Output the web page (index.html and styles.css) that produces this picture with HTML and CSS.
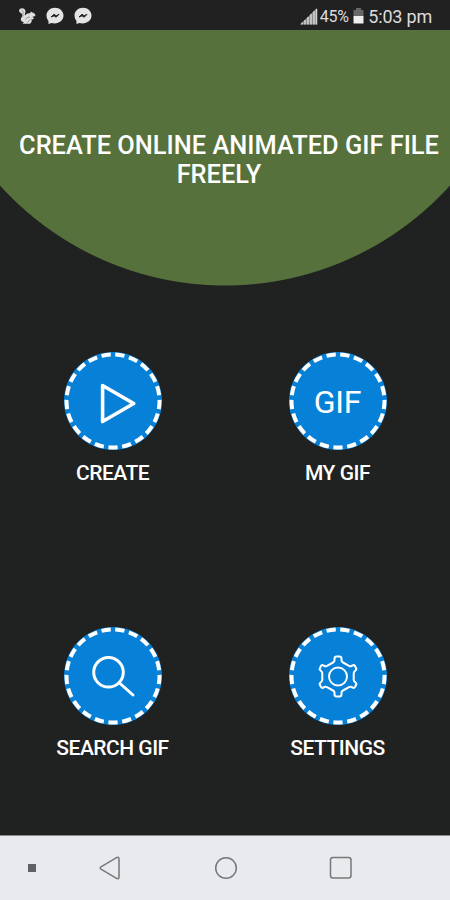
FILE: index.html
```html
<!DOCTYPE html>
<html lang="en">
<head>
  <meta charset="UTF-8">
  <meta name="viewport" content="width=device-width, initial-scale=1.0">
  <title>GIF Maker</title>
  <link rel="stylesheet" href="styles.css">
</head>
<body>
  <div class="screen">

    <div class="status-bar">
      <div class="notifications">
        <svg width="19" height="19" viewBox="0 0 19 19">
          <path d="M1 3.5C1.500 1.200 5 .6 6.800 2.500C8.500 4.500 6.300 6.400 7 8.500C8.300 6.800 10 6 12 6.300L13 4.500L14.200 5.500C16 5.500 17.300 7 17.500 8.500C16.800 9.600 15.300 9.500 14.500 9.800L16 11.500L14.500 12.500L13.500 11.800C14.200 14 13.500 15.500 12 16.800H4.500L6 15.300C3 14.500 2 12.500 3.500 10.500C4.600 9 4.800 7.700 3.500 6.500C2.500 5.700 1 5.300 1 3.500Z" fill="#dedede"/>
          <path d="M3.500 3.300C6.500 3.800 4.500 7 5 9.500M7.500 12.500C8.500 10.500 10.500 9.500 12 10.500M9.500 15.500L12 12.500" fill="none" stroke="#777" stroke-width=".7"/>
        </svg>
        <svg width="18" height="18" viewBox="0 0 18 18">
          <path d="M9 .7C4.200.7.500 4.200.500 8.500C.500 10.900 1.600 13 2.500 14V17L5.500 16C11.800 17.600 17.500 13.900 17.500 8.500C17.500 4.200 13.800.7 9 .7Z" fill="#e4e4e4"/>
          <path d="M5 10L8 7.300L10.200 8.800L13 7.300L10.200 10.200L8 8.800Z" fill="#222" stroke="#222"/>
        </svg>
        <svg width="18" height="18" viewBox="0 0 18 18">
          <path d="M9 .7C4.200.7.500 4.200.500 8.500C.500 10.900 1.600 13 2.500 14V17L5.500 16C11.800 17.600 17.500 13.900 17.500 8.500C17.500 4.200 13.800.7 9 .7Z" fill="#e4e4e4"/>
          <path d="M5 10L8 7.300L10.200 8.800L13 7.300L10.200 10.200L8 8.800Z" fill="#222" stroke="#222"/>
        </svg>
      </div>
      <div class="system">
        <svg class="signal" width="18" height="17" viewBox="0 0 18 17">
          <path d="M0 16.500L17 0V16.500Z" fill="#8c8c8c"/>
          <path d="M2 16.500V14.500M5 16.500V12M8 16.500V9M11 16.500V6M14 16.500V3M16.500 16.500V1" stroke="#d2d2d2" stroke-width="1.500"/>
        </svg>
        <span class="percent">45%</span>
        <svg class="battery" width="11" height="16" viewBox="0 0 11 16">
          <path d="M3 0H8V2H10.500V8H.500V2H3Z" fill="#686868"/>
          <path d="M.500 8H10.500V15.500H.500Z" fill="#efefef"/>
        </svg>
        <span class="time">5:03 pm</span>
      </div>
    </div>

    <header class="banner">
      <h1>CREATE ONLINE ANIMATED GIF FILE <span class="last-line">FREELY</span></h1>
    </header>

    <main class="menu">
      <a class="item">
        <svg class="badge" viewBox="0 0 98 98">
          <circle class="disc" cx="49" cy="49" r="49"/>
          <circle class="dashes" cx="49" cy="49" r="46.500" pathLength="210" transform="rotate(-90 49 49)"/>
          <path class="line play" d="M38.600 33.500L69.700 51.500L38.600 69.500Z"/>
        </svg>
        <span class="label">CREATE</span>
      </a>
      <a class="item">
        <svg class="badge" viewBox="0 0 98 98">
          <circle class="disc" cx="49" cy="49" r="49"/>
          <circle class="dashes" cx="49" cy="49" r="46.500" pathLength="210" transform="rotate(-90 49 49)"/>
          <text class="gif" x="48.500" y="61" text-anchor="middle">GIF</text>
        </svg>
        <span class="label">MY GIF</span>
      </a>
      <a class="item">
        <svg class="badge" viewBox="0 0 98 98">
          <circle class="disc" cx="49" cy="49" r="49"/>
          <circle class="dashes" cx="49" cy="49" r="46.500" pathLength="210" transform="rotate(-90 49 49)"/>
          <circle class="line" cx="44.500" cy="45.300" r="14.800"/>
          <path class="line" d="M55.500 56L69 68"/>
        </svg>
        <span class="label">SEARCH GIF</span>
      </a>
      <a class="item">
        <svg class="badge" viewBox="0 0 98 98">
          <circle class="disc" cx="49" cy="49" r="49"/>
          <circle class="dashes" cx="49" cy="49" r="46.500" pathLength="210" transform="rotate(-90 49 49)"/>
          <g class="line thin" transform="translate(49 49.500)">
            <circle r="9"/>
            <path d="M-3.500-16V-18Q-3.500-20-1.500-20H1.500Q3.500-20 3.500-18V-16Q3.500-14.800 5-14L11-10.700Q12.500-10 13.500-10.500L14.500-11Q16-12 17-10.500L18-8.500Q18.900-7 17.400-6L16.700-5.300Q15.700-4.500 15.700-3V3Q15.700 4.500 16.700 5.300L17.400 6Q18.900 7 18 8.500L17 10.500Q16 12 14.500 11L13.500 10.500Q12.500 10 11 10.700L5 14Q3.500 14.800 3.500 16V18Q3.500 20 1.500 20H-1.500Q-3.500 20-3.500 18V16Q-3.500 14.800-5 14L-11 10.700Q-12.500 10-13.500 10.500L-14.500 11Q-16 12-17 10.500L-18 8.500Q-18.900 7-17.400 6L-16.700 5.300Q-15.700 4.500-15.700 3V-3Q-15.700-4.500-16.700-5.300L-17.400-6Q-18.900-7-18-8.500L-17-10.500Q-16-12-14.500-11L-13.500-10.500Q-12.500-10-11-10.700L-5-14Q-3.500-14.800-3.500-16Z"/>
          </g>
        </svg>
        <span class="label">SETTINGS</span>
      </a>
    </main>

    <nav class="nav-bar">
      <span class="dot"></span>
      <svg class="back" width="22" height="24" viewBox="0 0 22 24">
        <path d="M2 10.800L17.500 1.700Q20 .500 20 3V21Q20 23.500 17.500 22.300L2 13.200Q.500 12 2 10.800Z"/>
      </svg>
      <svg class="home" width="24" height="24" viewBox="0 0 24 24">
        <circle cx="12" cy="12" r="10.300"/>
      </svg>
      <svg class="recent" width="24" height="24" viewBox="0 0 24 24">
        <rect x="1.500" y="1.500" width="20.500" height="20.500" rx="2.500"/>
      </svg>
    </nav>

  </div>
</body>
</html>
```

FILE: styles.css
```css
* {
  box-sizing: border-box;
}

body {
  margin: 0;
  font-family: Roboto, sans-serif;
  background-color: #202221;
}

.screen {
  display: flex;
  flex-direction: column;
  width: 450px;
  height: 900px;
  overflow: hidden;
  background-color: #202221;
}

.status-bar {
  display: flex;
  justify-content: space-between;
  align-items: center;
  height: 30px;
  padding: 2px 18px 0 17.5px;
  background-color: #222122;
  color: #dcdcdc;
}

.notifications {
  display: flex;
  align-items: center;
  gap: 9.5px;
}

.system {
  display: flex;
  align-items: center;
}

.percent {
  margin-left: 2px;
  font-size: 16px;
  letter-spacing: -0.2px;
}

.battery {
  margin: 0 4px 0 4.5px;
}

.time {
  font-size: 18px;
  letter-spacing: -0.2px;
}

/* green area with rounded bottom edge */
.banner {
  height: 256px;
  padding-top: 101px;
  background: radial-gradient(circle 303px at 225px -47.5px, #56713b 302.5px, transparent 303.5px);
}

.banner h1 {
  width: 430px;
  margin: 0 0 0 14px;
  color: #fff;
  font-size: 25.4px;
  font-weight: 500;
  line-height: 29px;
  text-align: center;
}

.last-line {
  padding-right: 20px;
}

.menu {
  display: grid;
  grid-template-columns: 1fr 1fr;
  grid-template-rows: 275px 1fr;
  flex: 1;
  padding-top: 66px;
}

.item {
  display: flex;
  flex-direction: column;
  align-items: center;
}

.badge {
  width: 98px;
  height: 98px;
}

.disc {
  fill: #0780d8;
}

.dashes {
  fill: none;
  stroke: #fff;
  stroke-width: 4;
  stroke-dasharray: 6.7 3.3;
  stroke-dashoffset: -1.65;
}

.line {
  fill: none;
  stroke: #fff;
  stroke-width: 3;
  stroke-linecap: round;
  stroke-linejoin: round;
}

.play {
  stroke-width: 3.6;
}

.thin {
  stroke-width: 2;
}

.gif {
  fill: #fff;
  font-size: 32px;
  letter-spacing: -0.3px;
}

.label {
  margin-top: 11px;
  color: #fff;
  font-size: 21px;
  font-weight: 500;
  line-height: 25px;
  letter-spacing: -0.5px;
}

.nav-bar {
  display: flex;
  align-items: center;
  height: 65px;
  padding-left: 28px;
  background-color: #e9eaee;
  border-top: 1px solid #8b8b8d;
}

.nav-bar svg {
  fill: none;
  stroke: #77787a;
  stroke-width: 1.5;
}

.dot {
  width: 8px;
  height: 8px;
  background-color: #606164;
}

.back {
  margin-left: 63px;
}

.home {
  margin-left: 92.5px;
}

.recent {
  margin-left: 91px;
}
```
